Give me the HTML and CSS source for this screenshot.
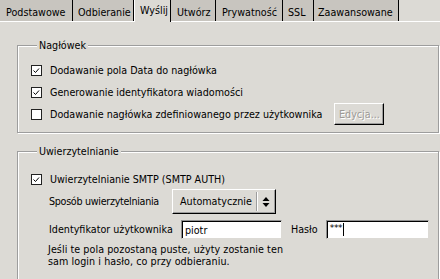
FILE: index.html
```html
<!DOCTYPE html>
<html lang="pl">
<head>
    <meta charset="UTF-8">
    <title>Konto - Wyślij</title>
    <link rel="stylesheet" href="styles.css">
</head>
<body>
    <div class="tabs">
        <div class="tab tab-basic">Podstawowe</div>
        <div class="tab tab-recv">Odbieranie</div>
        <div class="tab tab-send active">Wyślij</div>
        <div class="tab tab-compose">Utwórz</div>
        <div class="tab tab-privacy">Prywatność</div>
        <div class="tab tab-ssl">SSL</div>
        <div class="tab tab-advanced">Zaawansowane</div>
    </div>

    <div class="page">
        <fieldset class="frame frame-header">
            <legend>Nagłówek</legend>
            <div class="row">
                <span class="check on"><svg width="11" height="11" viewBox="0 0 11 11"><rect x="0.5" y="0.5" width="10" height="10" fill="#fff" stroke="#222"/><polyline points="2.5,5.5 4.5,7.5 8,3.5" fill="none" stroke="#000"/></svg></span>
                <span>Dodawanie pola Data do nagłówka</span>
            </div>
            <div class="row">
                <span class="check on"><svg width="11" height="11" viewBox="0 0 11 11"><rect x="0.5" y="0.5" width="10" height="10" fill="#fff" stroke="#222"/><polyline points="2.5,5.5 4.5,7.5 8,3.5" fill="none" stroke="#000"/></svg></span>
                <span>Generowanie identyfikatora wiadomości</span>
            </div>
            <div class="row">
                <span class="check"><svg width="11" height="11" viewBox="0 0 11 11"><rect x="0.5" y="0.5" width="10" height="10" fill="#fff" stroke="#222"/></svg></span>
                <span>Dodawanie nagłówka zdefiniowanego przez użytkownika</span>
                <button class="btn" disabled>Edycja...</button>
            </div>
        </fieldset>

        <fieldset class="frame frame-auth">
            <legend>Uwierzytelnianie</legend>
            <div class="row first">
                <span class="check on"><svg width="11" height="11" viewBox="0 0 11 11"><rect x="0.5" y="0.5" width="10" height="10" fill="#fff" stroke="#222"/><polyline points="2.5,5.5 4.5,7.5 8,3.5" fill="none" stroke="#000"/></svg></span>
                <span>Uwierzytelnianie SMTP (SMTP AUTH)</span>
            </div>
            <div class="row indent">
                <span class="label label-method">Sposób uwierzytelniania</span>
                <div class="combo">
                    <span class="combo-text">Automatycznie</span>
                    <span class="combo-sep"></span>
                    <svg class="combo-arrows" width="8" height="12" viewBox="0 0 8 12"><polygon points="4,1 7.5,5 0.5,5" fill="#000"/><polygon points="0.5,7 7.5,7 4,11" fill="#000"/></svg>
                </div>
            </div>
            <div class="row indent entries">
                <span class="label label-user">Identyfikator użytkownika</span>
                <div class="entry user">piotr</div>
                <span class="pass-label">Hasło</span>
                <div class="entry pass"><span class="stars">***</span><span class="caret"></span></div>
            </div>
            <p class="hint">Jeśli te pola pozostaną puste, użyty zostanie ten<br>sam login i hasło, co przy odbieraniu.</p>
        </fieldset>
    </div>
</body>
</html>
```

FILE: styles.css
```css
body {
    margin: 0;
    background: #dcdad5;
    color: #000;
    font-family: 'DejaVu Sans', sans-serif;
    font-size: 9.6px;
    overflow: hidden;
}

/* notebook tabs */
.tabs {
    display: flex;
    align-items: flex-end;
    height: 21px;
    border-bottom: 1px solid #fff;
}

.tab {
    height: 21px;
    line-height: 25px;
    padding-left: 6px;
    background: #c8c5bf;
    border-right: 1px solid #000;
    box-sizing: border-box;
    white-space: nowrap;
    overflow: hidden;
}

.tab.active {
    background: #dcdad5;
    height: 22px;
    line-height: 22px;
    margin-bottom: -1px;
    padding-left: 5px;
    border-left: 1px solid #fff;
}

.tab-basic { width: 73px; }
.tab-recv { width: 61px; padding-left: 5px; }
.tab-send { width: 37px; }
.tab-compose { width: 45px; }
.tab-privacy { width: 67px; }
.tab-ssl { width: 31px; padding-left: 5px; }
.tab-advanced { width: 85px; padding-left: 4px; }

.page {
    padding: 17px 1px 0 17px;
}

/* etched frames */
.frame {
    margin: 0;
    border: 1px solid #9d9d9d;
    box-shadow: inset 1px 1px 0 #fff, 1px 1px 0 #fff;
    padding: 7px 0 7px 13px;
}

.frame legend {
    margin-left: 6px;
    padding: 0 2px;
    line-height: 13px;
    background: #dcdad5;
}

.frame-auth {
    margin-top: 12px;
    padding-top: 12px;
    padding-bottom: 13px;
}

.row {
    display: flex;
    align-items: center;
    height: 22px;
}

.row.first {
    height: 19px;
}

.check {
    display: flex;
    width: 11px;
    height: 11px;
    margin-right: 8px;
}

.indent {
    padding-left: 18px;
    height: 25px;
}

.label {
    flex: none;
    white-space: nowrap;
}

.label-method {
    width: 123px;
    letter-spacing: -0.3px;
}

.label-user {
    width: 132px;
}

.btn {
    margin-left: 12px;
    height: 22px;
    width: 50px;
    padding: 0;
    font: inherit;
    color: #9c9a96;
    text-shadow: 1px 1px 0 #fff;
    background: #dcdad5;
    border: 1px solid;
    border-color: #fff #000 #000 #fff;
    box-shadow: inset -1px -1px 0 #9d9d9d;
}

/* option menu */
.combo {
    display: flex;
    align-items: center;
    height: 25px;
    width: 104px;
    box-sizing: border-box;
    border: 1px solid;
    border-color: #fff #000 #000 #fff;
    box-shadow: inset -1px -1px 0 #9d9d9d;
    padding-left: 7px;
}

.combo-text {
    flex: 1;
}

.combo-sep {
    width: 1px;
    height: 19px;
    background: #9d9d9d;
    border-right: 1px solid #fff;
    margin-right: 4px;
}

.combo-arrows {
    margin-right: 5px;
}

.entries {
    margin-top: 5px;
    height: 20px;
}

.entry {
    height: 19px;
    box-sizing: border-box;
    background: #fff;
    border: 1px solid;
    border-color: #8f8f8f #dcdad5 #dcdad5 #8f8f8f;
    box-shadow: inset 1px 1px 0 #000;
    padding: 3px 0 0 3px;
    line-height: 13px;
}

.entry.user {
    width: 101px;
}

.entry.pass {
    width: 103px;
    display: flex;
    align-items: flex-start;
    padding-top: 2px;
}

.pass-label {
    margin: 0 8px 0 9px;
}

.stars {
    font-size: 9px;
    line-height: 10px;
    letter-spacing: -0.3px;
}

.caret {
    width: 1px;
    height: 13px;
    background: #000;
    margin-left: 1px;
}

.hint {
    margin: 5px 0 0 17px;
    line-height: 12px;
    letter-spacing: 0.06px;
}
```
